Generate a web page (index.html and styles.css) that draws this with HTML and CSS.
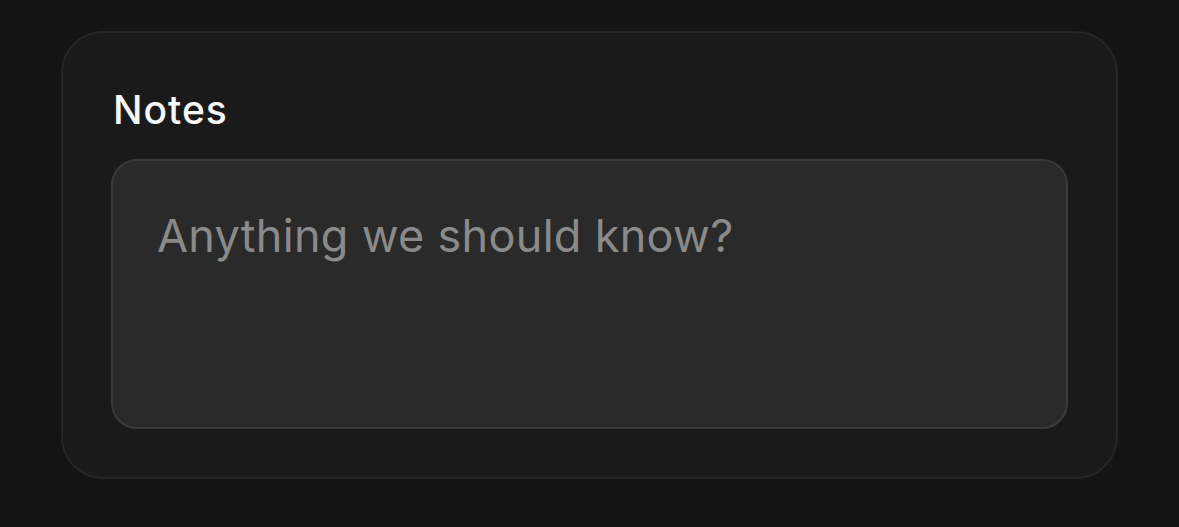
FILE: index.html
```html
<!DOCTYPE html>
<html>
<head>
<meta charset="utf-8">
<link rel="stylesheet" href="styles.css">
</head>
<body>
<div class="page">
  <div class="card">
    <label class="label" for="notes">Notes</label>
    <textarea id="notes" class="notes" placeholder="Anything we should know?"></textarea>
  </div>
</div>
</body>
</html>
```

FILE: styles.css
```css
html, body {
  margin: 0;
  padding: 0;
  background: #141414;
  width: 1179px;
  height: 527px;
  overflow: hidden;
}
.page {
  padding: 31px 61px 0 61px;
  font-family: Inter, "Noto Sans", sans-serif;
}
.card {
  box-sizing: border-box;
  width: 1057px;
  height: 448px;
  background: #1a1a1a;
  border: 2px solid #262626;
  border-radius: 42px;
  padding: 54px 48px 48px 48px;
  display: flex;
  flex-direction: column;
}
.label {
  color: #f7f7f7;
  font-size: 39px;
  line-height: 46px;
  font-weight: 500;
  letter-spacing: 1px;
  margin-left: 2px;
  margin-bottom: 26px;
}
.notes {
  box-sizing: border-box;
  width: 957px;
  height: 270px;
  background: #2a2a2a;
  border: 2px solid #3a3a3a;
  border-radius: 26px;
  padding: 48px 44px;
  color: #e5e5e5;
  font-family: Inter, "Noto Sans", sans-serif;
  font-size: 45px;
  line-height: 54px;
  letter-spacing: 0.3px;
  resize: none;
  outline: none;
}
.notes::placeholder {
  color: #8a8a8a;
}
```
